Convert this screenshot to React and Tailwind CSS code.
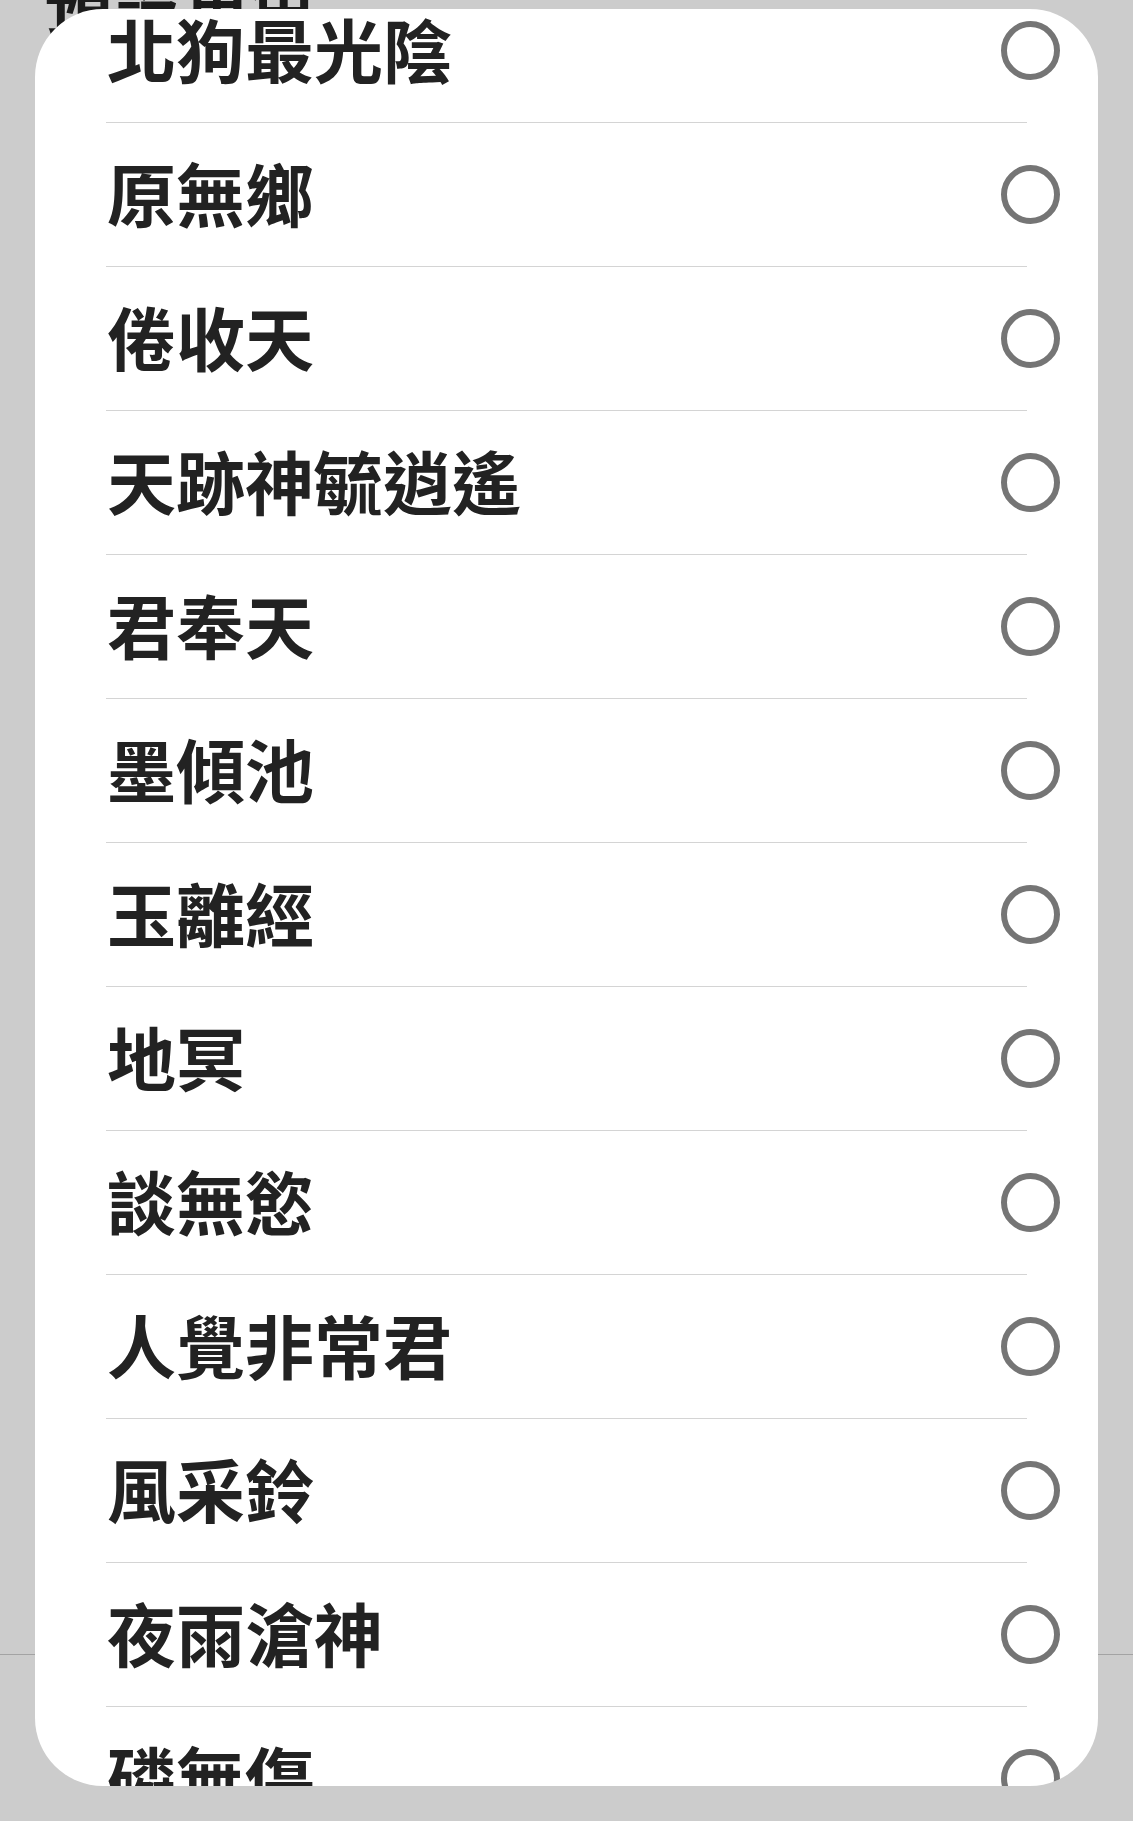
const names = [
  '北狗最光陰',
  '原無鄉',
  '倦收天',
  '天跡神毓逍遙',
  '君奉天',
  '墨傾池',
  '玉離經',
  '地冥',
  '談無慾',
  '人覺非常君',
  '風采鈴',
  '夜雨滄神',
  '磷無傷',
];

const Radio = () => (
  <span className="block w-[59px] h-[59px] shrink-0 rounded-full border-[6px] border-[#757575]"></span>
);

const Row = ({ name, last }) => (
  <div>
    <div className="h-[143px] flex items-center justify-between pl-[72px] pr-[38px]">
      <span className="pb-[5px] text-[69px] leading-none font-bold text-[#222222]">{name}</span>
      <Radio />
    </div>
    {!last && <div className="mx-[71px] h-px bg-[#d4d4d4]"></div>}
  </div>
);

export default function App() {
  return (
    <div className="relative w-[1133px] h-[1821px] overflow-hidden bg-[#cccccc] font-['Noto_Sans_CJK_TC','Noto_Sans',sans-serif]">
      {/* page behind the scrim */}
      <div className="flex flex-col">
        <h1 className="mt-[-33px] pl-[45px] text-[68px] leading-none font-bold text-[#1c1c1c]">預設角色</h1>
        <div className="mt-[1619px] h-px bg-[#a3a3a3]"></div>
      </div>

      {/* selection dialog */}
      <div className="absolute left-[35px] top-[9px] w-[1063px] h-[1777px] rounded-[68px] bg-white overflow-hidden">
        <div className="mt-[-30px]">
          {names.map((name, i) => (
            <Row key={name} name={name} last={i === names.length - 1} />
          ))}
        </div>
      </div>
    </div>
  );
}
